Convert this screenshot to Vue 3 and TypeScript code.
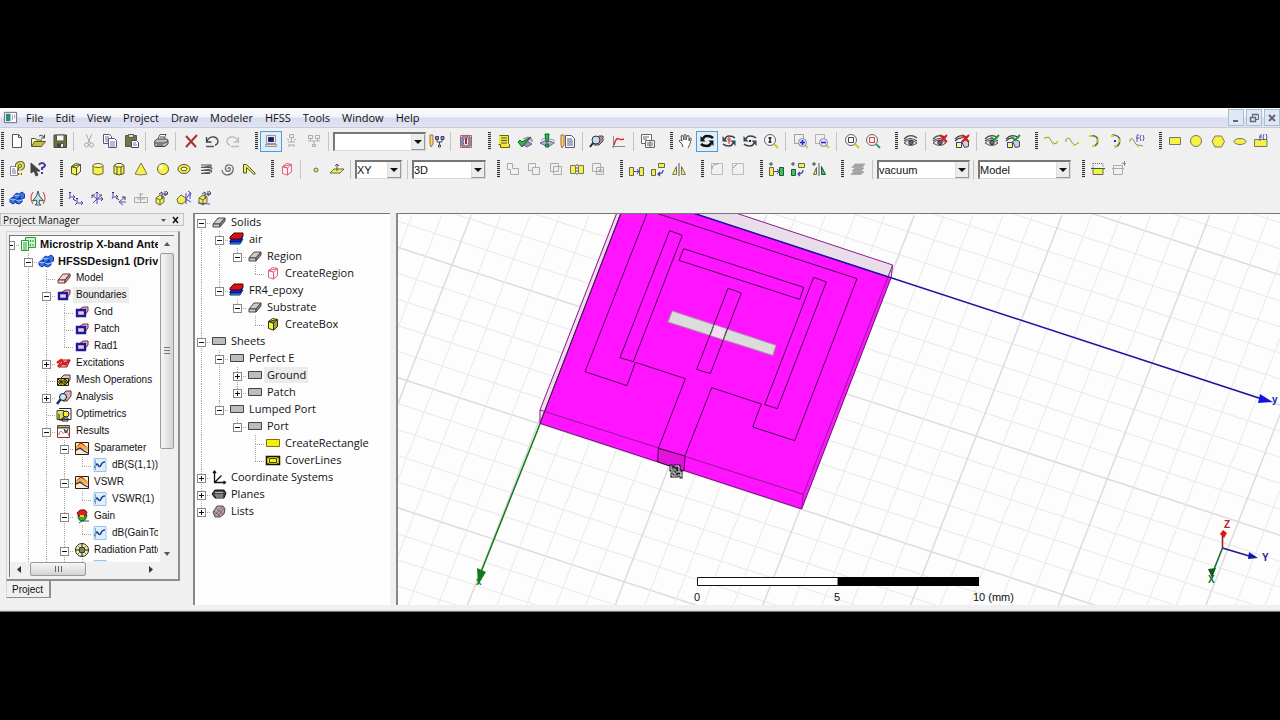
<script setup lang="ts">
import { ref } from 'vue'

type ToolItem =
  | { kind: 'button'; icon: string; label: string; active?: boolean; disabled?: boolean }
  | { kind: 'sep' }
  | { kind: 'select'; label: string; value: string; size: string }

interface TreeNode {
  depth: number
  label: string
  icon: string
  state?: 'open' | 'closed'
  bold?: boolean
  selected?: boolean
}
interface TreeRow extends TreeNode {
  guides: boolean[]
  up: boolean
  down: boolean
}

const Y = '#f4f244'
const box = (fill: string, stroke: string, side: string) =>
  `<path d="M3.5 5.5l4-3 5 1v7l-4 3.5-5-1.5z" fill="${fill}" stroke="${stroke}"/><path d="M3.5 5.5l5 1.5v7l4-3.5v-7z" fill="${side}" stroke="${stroke}"/><path d="M3.5 5.5l5 1.5 4-3.5" stroke="${stroke}"/>`
const brick = (top: string, side: string, line: string) =>
  `<path d="M2 10l5-6h7l-5 6z" fill="${top}" stroke="${line}"/><path d="M2 10h7v3H2z" fill="${top}" stroke="${line}"/><path d="M9 10l5-6v3l-5 6z" fill="${side}" stroke="${line}"/>`
const eye =
  '<path d="M1 6q6-6 13-1M1 8q6-5 13 0" stroke="#444" stroke-width="1.200"/><path d="M1 10q6-6 13 0-6 5-13 0z" fill="#e4e4ea" stroke="#555"/><circle cx="8" cy="9.500" r="2.200" fill="#668" stroke="#334"/>'
const home =
  '<path d="M1 6q6-6 13-1M1 8q4-4 8-3" stroke="#444" stroke-width="1.200"/><path d="M7.500 8.500l3-2 4 2v5l-4 1z" fill="#ccd" stroke="#445"/><path d="M2.500 9.500h5v5h-5z" fill="#ff6" stroke="#33a"/>'
const redX = '<path d="M8 2l7 7M15 2l-7 7" stroke="#d02020" stroke-width="2"/>'
const greenTick = '<path d="M7 4l3 3 5-5" stroke="#239b3a" stroke-width="2"/>'
const lens = (inner: string, handle = '#d8c82a') =>
  `<path d="M11 11l4 4" stroke="${handle}" stroke-width="2"/><circle cx="7" cy="7" r="5.500" fill="#f6f6fa" stroke="#666"/>${inner}`
const rotate = (c: string, w: string) =>
  `<path d="M4 6q1-3 4-3 4 0 6 2M12 10q-1 3-4 3-4 0-6-2" stroke="${c}" stroke-width="${w}"/><path d="M1.500 3v5.500h5zM14.500 13V7.500h-5z" fill="${c}" stroke="none"/>`
const axisBox =
  '<path d="M2 8l4-3 4 2v5l-4 3-4-2z" fill="#f4f244" stroke="#665"/><path d="M2 8l4 2 4-3M6 10v5" stroke="#665"/><path d="M8 2v7M5 4l3-2M8 4h6M12 1l2 2M11 6l3-3M11 1v5" stroke="#446"/>'
const plus = '<path d="M1 3h4M3 1v4" stroke="#444"/>'

const icons: Record<string, string> = {
  new: '<path d="M3.500 1.500h6l3 3v10h-9z" fill="#fff" stroke="#555"/><path d="M9.500 1.500v3h3" stroke="#555"/>',
  open: '<path d="M1.500 13V5.500h4l1 1.500h5v2" fill="#fdfbc0" stroke="#5b5a20"/><path d="M1.500 13.500l3-5h11l-4 5z" fill="#c3bd4c" stroke="#5b5a20"/><path d="M9 3q3-2 5 1M14.500 1.500V5H11" stroke="#444"/>',
  save: '<path d="M2 2h12.500v12.500H2z" fill="#6f723a" stroke="#444"/><path d="M4.500 2h7.500v6H4.500z" fill="#f7f7ee" stroke="#555"/><path d="M5 10.500h6.500v4H5z" fill="#444" stroke="none"/><path d="M9 11h2v3H9z" fill="#eee" stroke="none"/>',
  cut: '<path d="M5 1l4 9M11 1L7 10" stroke="#aaa"/><circle cx="5.500" cy="12" r="2" stroke="#aaa"/><circle cx="10.500" cy="12" r="2" stroke="#aaa"/>',
  copy: '<path d="M1.500 1.500h6l2 2v7h-8z" fill="#fff" stroke="#557"/><path d="M6.500 5.500h6l2 2v7h-8z" fill="#fff" stroke="#557"/><path d="M3 4h4M3 6h3M3 8h3M8 9h5M8 11h5M8 13h5" stroke="#6a74b8"/>',
  paste: '<path d="M1.500 2.500h11v11h-11z" fill="#76753c" stroke="#555"/><path d="M4.500 1.500h5v3h-5z" fill="#ddd" stroke="#555"/><path d="M7.500 7.500h5l2 2v5h-7z" fill="#fff" stroke="#446"/><path d="M9 10h3M9 12h4" stroke="#6a74b8"/>',
  print: '<path d="M5 6l2-4.500h6L11 6" fill="#fff" stroke="#555"/><path d="M1.500 8l3-2h9l1.500 1v4l-3 2.500h-10z" fill="#bbb" stroke="#444"/><path d="M2 10h10l3-2M4 12h6M7 4h4" stroke="#444"/>',
  del: '<path d="M3 3l10 11M14 2L3 14" stroke="#a8322e" stroke-width="2"/>',
  undo: '<path d="M2.500 4v5h5M3 8.500q2-5 7-4.500 4 1 4 5-1 3-3 3" stroke="#444" stroke-width="1.300"/><path d="M2 13.500h8" stroke="#555" stroke-width="1.500"/>',
  redo: '<path d="M13.500 4v5h-5M13 8.500q-2-5-7-4.500-4 1-4 5 1 3 3 3" stroke="#bbb" stroke-width="1.300"/><path d="M6 13.500h8" stroke="#bbb" stroke-width="1.500"/>',
  pc: '<path d="M3.500 2.500h9v8h-9z" fill="#e8e8ee" stroke="#999"/><path d="M5.500 4.500h5v4h-5z" fill="#0a1aa8" stroke="#334"/><path d="M2.500 11.500h11v2h-11z" fill="#ddd" stroke="#999"/>',
  remote: '<path d="M5.500 1.500h4v3h-4zM7.500 5v4M4 9h7M4 12h7M5 14l1-2M10 14l-1-2M3 6l2 1M12 6l-2 1" stroke="#aaa"/>',
  cluster: '<path d="M2.500 2.500h4v3h-4zM9.500 2.500h4v3h-4zM4.500 6v2h7V6M8 8v3M6.500 11.500h3v2h-3zM2 8h2M12 8h2" stroke="#aaa"/>',
  network: '<path d="M1 2h3v9l-2 3-1-3z" fill="#f3e13a" stroke="#a66"/><path d="M6.500 3.500h3v3h-3zM12 3.500h3v3h-3z" fill="#8888cc" stroke="#446"/><path d="M8 7v2h5V7M10.500 9v3M9.500 12h2v2h-2z" stroke="#446"/>',
  book: '<path d="M2.500 2.500h11v12h-11z" fill="#dfe6f5" stroke="#c55"/><path d="M4 4h8v9H4z" fill="#e8f0ff" stroke="#335"/><path d="M6 5q-2 4 0 7M10 5q2 4 0 7" stroke="#36a"/><path d="M8 5v6" stroke="#b22" stroke-width="2"/>',
  list: '<path d="M3.500 2.500h9v8l1 1v3h-9v-3h-2" fill="#f0ea30" stroke="#665f10"/><path d="M5 5h6M5 7.500h6M5 10h6" stroke="#554"/>',
  check: '<path d="M5 11l5-3 5 3-5 3z" fill="#b77bd0" stroke="#668"/><path d="M6 6l5-2 4 2v3" fill="#b9c3d0" stroke="#889"/><path d="M1 9l4 5 9-10-9 5-2-2z" fill="#28b84a" stroke="#14602a"/>',
  run: '<path d="M1 10l7-3 7 3-6 4z" fill="#b5b0d8" stroke="#668"/><path d="M2 7l4-2 9 2v4" stroke="#99a"/><path d="M6 1h4l-1 8H7zM6.500 11h3v3h-3z" fill="#2cc052" stroke="#14602a"/>',
  notes: '<path d="M1 2h3v10l-2 3-1-3z" fill="#f3e13a" stroke="#a66"/><path d="M5.500 2.500h6l3 3v9h-9z" fill="#fff" stroke="#557"/><path d="M7 6h5M7 8h6M7 10h6M7 12h6" stroke="#557"/>',
  mag: '<path d="M5 6l5-3h4v5l-4 4H5z" fill="#bb8fa0" stroke="#544"/><circle cx="7" cy="7" r="4" fill="#bfe0ee" stroke="#333"/><path d="M4 10l-3 4" stroke="#223" stroke-width="2"/>',
  plot: '<path d="M2.500 3v12M1 13.500h13" stroke="#888"/><path d="M3 12q2-8 5-6 1 1 5 0" stroke="#e03030" stroke-width="1.500"/>',
  sheets: '<path d="M1.500 1.500h10v9h-10z" fill="#fff" stroke="#666"/><path d="M3 4h6M3 6h4" stroke="#666"/><path d="M5.500 7.500h9v7h-9z" fill="#eee" stroke="#666"/><path d="M7 10h6M7 12h6M10 8v6" stroke="#777"/>',
  hand: '<path d="M5 14q0-3-4-6 1-2 3 0L3 3q1-1 2 0l1 4V2q1-1 2 0v5l1-4q1-1 2 0v5l1-3q2 0 1 2-1 5-3 8" fill="#fff" stroke="#555"/>',
  rot: rotate('#111', '2.5'),
  rotZ: rotate('#345', '1.500') + '<path d="M8 4v7M6 6h4M7 8h3" stroke="#d33"/>',
  rotS: rotate('#345', '1.500') + '<path d="M7 7h2v2H7z" fill="#222" stroke="none"/>',
  zoomD: lens('<path d="M7 4v6M5.500 5h3M5.500 9h3" stroke="#222" stroke-width="1.500"/>'),
  zoomIn: '<path d="M1.500 1.500h9v9h-9z" stroke="#555" stroke-dasharray="1 1"/><path d="M12 12l3 3" stroke="#d8c82a" stroke-width="2"/><circle cx="9.500" cy="9.500" r="4" fill="#dfe0fa" stroke="#88a"/><path d="M7 9.500h5M9.500 7v5" stroke="#22c" stroke-width="1.500"/>',
  zoomOut: '<path d="M1.500 1.500h9v9h-9z" stroke="#777" stroke-dasharray="1 1"/><path d="M12 12l3 3" stroke="#d8c82a" stroke-width="2"/><circle cx="9.500" cy="9.500" r="4" fill="#dfe0fa" stroke="#88a"/><path d="M7 9.500h5" stroke="#22c" stroke-width="1.500"/>',
  fitAll: lens('<path d="M4.500 4.500h5v5h-5z" stroke="#444"/>'),
  fitSel: lens('<path d="M4.500 4.500h5v5h-5z" stroke="#d33"/>', '#3c9a6a'),
  eye,
  eyeX: eye + redX,
  homeX: home + redX,
  eyeV: eye + greenTick,
  homeV: home + greenTick,
  line: '<path d="M2 5l4-1 4 7 4-1" stroke="#889"/><path d="M1 4h2v2H1zM5 4h2v2H5zM9 9h2v2H9zM13 8h2v2h-2z" fill="#d6d020" stroke="none"/>',
  spline: '<path d="M1 8q3-6 6 0t7 2" stroke="#889"/><path d="M1 7h2v2H1zM5 5h2v2H5zM9 11h2v2H9zM13 9h2v2h-2z" fill="#d6d020" stroke="none"/>',
  arc: '<path d="M4 3q8-1 8 5-1 5-5 5" stroke="#667" stroke-width="1.500"/><path d="M3 2h3v2H3zM10 6h3v3h-3zM6 12h3v2H6z" fill="#d6d020" stroke="none"/>',
  arcC: '<path d="M4 2q8 0 8 6-1 5-5 6" stroke="#667" stroke-width="1.500"/><path d="M3 2h3v2H3zM10 6h3v3h-3zM6 12h3v2H6z" fill="#d6d020" stroke="none"/><path d="M6 8h2" stroke="#33a" stroke-width="2"/>',
  eqn: '<path d="M0 8q3-5 5 0t4 4l5 1" stroke="#889"/><path d="M0 7h2v2H0zM8 12h2v2H8z" fill="#d6d020" stroke="none"/><path d="M8 9V3q0-2 2-1M7 5h3M12 2q-2 3 0 6M14 2q2 3 0 6" stroke="#55b"/>',
  rect: `<path d="M2.500 4.500h11v7h-11z" fill="${Y}" stroke="#776"/>`,
  circle: `<circle cx="8" cy="8" r="5.500" fill="${Y}" stroke="#776"/>`,
  hex: `<path d="M2 8.500l3-5.500h6.500l3 5.500-3 5.500H5z" fill="${Y}" stroke="#776"/>`,
  ellipse: `<ellipse cx="8" cy="8.500" rx="6" ry="3" fill="${Y}" stroke="#776"/>`,
  eqSurf: `<path d="M1.500 6.500h12.500v7H1.500z" fill="${Y}" stroke="#776"/><path d="M7 8V3q0-2 2-1M6 4h3M11 1q-2 3 0 6M13 1q2 3 0 6" stroke="#55b"/>`,
  help: '<path d="M1.500 5.500h7v9h-7z" fill="#fff" stroke="#888"/><path d="M3 8h3M3 10h4M3 12h4" stroke="#77a"/><path d="M8 6V4q1-2 3.500-2T14 5q0 2-3 3v2M11 12v2" stroke="#665" stroke-width="4"/><path d="M8 6V4q1-2 3.500-2T14 5q0 2-3 3v2M11 12v2" stroke="#e8e030" stroke-width="2"/>',
  ctxHelp: '<path d="M1 2v10l3-2 2 5 2-1-2-4h4z" fill="#444" stroke="#444"/><path d="M9 4q1-2 3-2t3 2q0 2-3 3v2M12 11v2" stroke="#443a9a" stroke-width="2"/>',
  cube: box(Y, '#55542a', '#fbfbb0'),
  cyl: `<path d="M3 4.500v8q5 3 10 0v-8z" fill="${Y}" stroke="#66652f"/><ellipse cx="8" cy="4.500" rx="5" ry="2" fill="#fdfcc0" stroke="#66652f"/>`,
  prism: `<path d="M3 4.500v8q5 3 10 0v-8z" fill="${Y}" stroke="#55542a"/><path d="M3 4.500l3-2h4l3 2-3 1.500H6zM6 6v8M10 6v8" fill="#fdfcc0" stroke="#55542a"/>`,
  cone: `<path d="M8 2l6 11q-6 2-12 0z" fill="${Y}" stroke="#776"/>`,
  sphere: `<circle cx="8" cy="8" r="5.500" fill="${Y}" stroke="#66652f"/><circle cx="6" cy="6" r="2" fill="#ffffd0" stroke="none"/>`,
  torus: `<ellipse cx="8" cy="8" rx="6" ry="4.500" fill="${Y}" stroke="#55542a"/><ellipse cx="8" cy="8" rx="3" ry="1.800" fill="#fff" stroke="#55542a"/>`,
  helix: '<path d="M3 4h9q2 0 1 1l-10 1.500h10q2 1 0 1.500L3 9.500h10q1 1 0 1.500L3 12.500h9" stroke="#555" stroke-width="1.200"/>',
  spiral: '<path d="M8 8q0-2 2-1 1 3-2 3.500-3-1-2.500-4T10 4q4 1 3 5.500T6 14q-4-2-4-5" stroke="#666" stroke-width="1.200"/>',
  bond: `<path d="M2.500 12V3.500h3l9 9-1.500 1-7.500-7v5.500z" fill="${Y}" stroke="#55542a"/>`,
  region: box('#fff4f6', '#e0607a', '#fff4f6'),
  dot: `<circle cx="8" cy="9" r="2" fill="${Y}" stroke="#665"/>`,
  plane: `<path d="M1 12l4-4h10l-4 4z" fill="${Y}" stroke="#665"/><path d="M8 10V3M6 5l2-2 2 2" stroke="#555"/>`,
  unite: '<path d="M2.500 2.500h5v5h6v6h-8v-5h-3z" stroke="#aaa"/>',
  subtract: '<path d="M2.500 2.500h7v4h-3v3h-4z" stroke="#aaa"/><path d="M6.500 6.500h7v7h-7z" stroke="#aaa"/>',
  intersect: '<path d="M2.500 2.500h8v8h-8zM5.500 5.500h8v8h-8z" stroke="#aaa"/>',
  split: `<path d="M1.500 4.500h5v8h-5zM9.500 4.500h5v8h-5z" fill="${Y}" stroke="#776"/><path d="M8 3v11" stroke="#555" stroke-dasharray="2 1"/>`,
  imprint: '<path d="M2.500 2.500h8v8h-8z" stroke="#aaa"/><path d="M6.500 6.500h7v7h-7zM9 9h3v2H9z" stroke="#aaa"/>',
  move: `<path d="M1.500 6.500h4v8h-4zM11.500 6.500h4v8h-4z" fill="${Y}" stroke="#665"/><path d="M6 10.500h5M9 8l2 2.500L9 13" stroke="#44a"/>`,
  turn: `<path d="M8.500 2.500h6v4h-6zM1.500 8.500h4v6h-4z" fill="${Y}" stroke="#665"/><path d="M13 9q0 4-5 4M10 11l-2 2 2 2" stroke="#44a" stroke-width="1.300"/>`,
  mirror: `<path d="M1.500 13.500h4v-8zM14.500 13.500h-4v-8z" fill="${Y}" stroke="#776"/><path d="M8 2v13" stroke="#555"/>`,
  dupMove: plus + `<path d="M1.500 6.500h4v8h-4z" fill="${Y}" stroke="#665"/><path d="M11.500 6.500h4v8h-4z" fill="#39c94f" stroke="#254"/><path d="M6 10.500h5M9 8l2 2.500L9 13" stroke="#44a"/>`,
  dupTurn: plus + `<path d="M8.500 2.500h6v4h-6z" fill="${Y}" stroke="#665"/><path d="M1.500 8.500h4v6h-4z" fill="#39c94f" stroke="#254"/><path d="M13 9q0 4-5 4M10 11l-2 2 2 2" stroke="#44a" stroke-width="1.300"/>`,
  dupMirror: plus + `<path d="M2.500 13.500h3v-7z" fill="${Y}" stroke="#665"/><path d="M14.500 13.500h-4v-8z" fill="#39c94f" stroke="#254"/><path d="M8 2v13" stroke="#555"/>`,
  fillet: '<path d="M2.500 2.500h11v11h-11z" stroke="#bbb"/><path d="M3 8q0-5 6-5" stroke="#999"/>',
  chamfer: '<path d="M2.500 2.500h11v11h-11z" stroke="#bbb"/><path d="M3 7l4-4" stroke="#999"/>',
  layers: '<path d="M2 6.500l3-3.500h10l-3 3.500zM2 10l3-3h9l-3 3zM1 13.500l3-3h10l-3 3z" fill="#a2a2a2" stroke="#aaa"/>',
  section: `<path d="M3 2.500h10v4" stroke="#666" stroke-dasharray="1 1"/><path d="M3 2v5" stroke="#666" stroke-dasharray="1 1"/><path d="M3 7.500h10v6H3z" fill="${Y}" stroke="#665"/><path d="M1 7.500h14" stroke="#263"/>`,
  sectionAdd: '<path d="M2.500 4.500h9v9h-9zM1 7.500h12" stroke="#aaa"/><path d="M11 2.500h4M13.500 0v5" stroke="#888"/>',
  hfss: '<path d="M1 9l3-2 3 2v3l-3 2-3-2zM5 5l3-2 3 2v3l-3 2-3-2zM7 10l3-2 3 2v2l-3 2-3-1zM10 4l3-2 2.500 2v4l-3 1-2-1z" fill="#2a7ae0" stroke="#2030a8"/><path d="M5 5l3 1 3-1M1 9l3 1 3-1M7 10l3 1 3-1" stroke="#9cf"/>',
  plane3d: '<path d="M8 1l1.500 5 4 5-4-1-.5 3 2 2H5l2-2-.5-3-4 1 4-5z" fill="#bfe6ea" stroke="#355"/><path d="M3 2Q-1 8 3 14M13 2q4 6 0 12" stroke="#d55" stroke-width="1.200"/>',
  cs1: '<path d="M2 2v5h5M2 7l-1 2M5 5l2 2-2 2M9 8v5h6M9 13l-2 2M13 11l2 2-2 2" stroke="#5148c8"/><path d="M1 3l1-1 1 1M5 9l3 2M8 9l1-1 1 1" stroke="#333"/>',
  cs2: '<path d="M8 2v12M3 5l5 4 5-4M8 9l-4 4M8 9h6" stroke="#5148c8"/><path d="M6.500 3.500L8 2l1.500 1.500M3 8V5h3M12 7l2 2-2 2M10 5h3" stroke="#446"/>',
  cs3: '<path d="M2 2v5h5M2 7l-1 2M14 7l-6 5h7M8 12l4 3" stroke="#5148c8"/><path d="M1 3l1-1 1 1M5 8l3 2M11 7h3v3M5 5l2 2" stroke="#333"/>',
  cs4: '<path d="M1.500 7.500h13v5h-13zM7.500 3v9M4 9h8M6 4h4" stroke="#aaa"/>',
  cs5: axisBox,
  cs6: '<path d="M1 9l4-4 5 3v3l-4 3-4-1z" fill="#f4f244" stroke="#665"/><path d="M10 3v11M10 9l4-6M10 9l5 3M12 1l3 2-1 3M14 5v4" stroke="#5148c8"/>',
  cs7: axisBox + '<path d="M1 13l12 1" stroke="#5148c8"/>',
  project: '<path d="M5.500 1.500h10v10h-10z" fill="#c9f5c9" stroke="#2f9a3c"/><path d="M1.500 4.500h7v10h-7z" fill="#e8ffe8" stroke="#2f9a3c"/><path d="M3 7h4M3 9h4M3 11h4M3 13h4M10.500 4v2M13 4v2M10.500 8v2M13 8v2" stroke="#2f9a3c"/>',
  model: brick('#f3d3d3', '#b58f8f', '#6b3b3b'),
  solid: brick('#cfcaca', '#8d8686', '#4c4646'),
  bound: '<path d="M5 6l4-3h5v4l-4 5z" fill="#f0b8c4" stroke="#7a2b3b"/><path d="M3 6h8v6H3z" fill="#f1c9d6" stroke="#1a1a9a" stroke-width="2.400"/>',
  excite: '<path d="M2 11l4-6h8l-3 7H3z" fill="#f0b8c4" stroke="#7a2b3b"/><path d="M1 8l4-3 4 4 5-4M2 12q4-5 9-2" stroke="#e01818" stroke-width="2.400"/>',
  mesh: '<path d="M5 6l3-3h6v5l-3 4z" fill="#e9c9c9" stroke="#533"/><path d="M1.500 6.500h11v7h-11z" fill="#e8dc30" stroke="#221"/><path d="M2 10h10M5 7v6M9 7v6M2 7l3 3 4-3 3 3M2 13l3-3 4 3 3-3" stroke="#221"/>',
  analysis: '<path d="M6 6l4-4h5v5l-4 5H7z" fill="#e3b3bb" stroke="#533"/><circle cx="7" cy="8" r="3.500" fill="#c9eaf5" stroke="#111"/><path d="M4.500 10.500L1 15" stroke="#14306a" stroke-width="2.500"/>',
  opti: '<path d="M3 2.500h12v11H8" fill="#fff" stroke="#224"/><path d="M1 4.500h7v9H1z" fill="#e9e05a" stroke="#443"/><circle cx="10" cy="8" r="3" fill="#f4ec30" stroke="#222"/><path d="M3 8v6h4M6 12h6v3H6z" stroke="#222"/>',
  results: '<path d="M1.500 2.500h12v12h-12z" fill="#fff" stroke="#833"/><path d="M2 4.500h11" stroke="#2a6a3a" stroke-width="2"/><path d="M3 12q1-6 3-3t3-1 4 5" stroke="#d66"/><path d="M8 6l2 4 2-4" stroke="#222"/>',
  report: '<path d="M1.500 2.500h13v12h-13z" fill="#fff1b8" stroke="#222"/><path d="M2 8l5-5 7 6" stroke="#c22" stroke-width="1.500"/><path d="M2 7l5-3 7 4v3l-6-2-6 2z" fill="#f3b440" stroke="none"/><path d="M2 10l4-2 4 3 4 2" stroke="#2222b8" stroke-width="1.300"/>',
  trace: '<path d="M2 1.500h12v13H2z" fill="#dff0fd" stroke="#9cc4e8"/><path d="M3 11q1-6 3-3t3 0 4-3" stroke="#223a9a" stroke-width="1.500"/><path d="M3.500 3v10" stroke="#7ab"/>',
  gain: '<path d="M4 7q0 6 4 6t5-6z" fill="#3ca83c" stroke="#165a16"/><path d="M3 5q3-4 5-3 4-1 5 3l-2 3H5z" fill="#d82222" stroke="#711"/><path d="M6 7h4v2H6z" fill="#f0d020" stroke="none"/><path d="M8 13h7M8 13l-3 2" stroke="#146a5a"/>',
  radiation: '<circle cx="8" cy="8" r="6.500" fill="#f5f3a8" stroke="#222"/><circle cx="8" cy="8" r="3" stroke="#333"/><path d="M1 8h14M8 1v14" stroke="#222"/><path d="M3.500 3.500l9 9M12.500 3.500l-9 9" stroke="#776"/>',
  material: '<path d="M1 12l4-4h9l-3 5H1z" fill="#29b6f2" stroke="#036"/><path d="M1 10l4-5h9l-3 6H1z" fill="#1a1ae0" stroke="#006"/><path d="M1 6l4-4h9v3l-3 3H1z" fill="#d41414" stroke="#500"/>',
  createBox: box(Y, '#332', '#a8a430'),
  sheet: '<path d="M1.500 4.500h13v7h-13z" fill="#bdbdbd" stroke="#444"/>',
  yellow: '<path d="M1.500 4.500h13v7h-13z" fill="#f5f000" stroke="#77731a"/>',
  cover: '<path d="M1.500 4.500h13v8h-13z" fill="#f5f000" stroke="#111" stroke-width="1.500"/><path d="M4.500 6.500h7v4h-7zM2 5l2 1M14 5l-2 1M2 12l2-1M14 12l-2-1" stroke="#443"/>',
  coords: '<path d="M3.500 2v11.500h11M3.500 13.500l7-7M2 4l1.500-2L5 4M12.500 12l2 1.500-2 1.500" stroke="#111" stroke-width="1.300"/>',
  planes: '<path d="M1 8l3-4h9l2 3-2 5H4z" fill="#444" stroke="#111"/><path d="M4 6.500h8M4 9h8M5 11h7" stroke="#bbb"/>',
  lists: '<path d="M2 9l4-6h6l2 3-1 5-4 3H4z" fill="#b9a5a5" stroke="#5a4848"/><path d="M4 12l7-8M7 13l6-8M3 8l6 5M5 5l7 6" stroke="#7a6565"/>',
}

const b = (icon: string, label: string, extra: { active?: boolean; disabled?: boolean } = {}): ToolItem => ({
  kind: 'button', icon, label, ...extra,
})
const s: ToolItem = { kind: 'sep' }
const off = { disabled: true }
const sel = (label: string, value: string, size: string): ToolItem => ({ kind: 'select', label, value, size })

const toolRows: { name: string; bars: ToolItem[][] }[] = [
  {
    name: 'main',
    bars: [
      [b('new', 'New'), b('open', 'Open'), b('save', 'Save'), s, b('cut', 'Cut', off), b('copy', 'Copy'), b('paste', 'Paste'), s, b('print', 'Print'), s, b('del', 'Delete'), b('undo', 'Undo'), b('redo', 'Redo', off)],
      [b('pc', 'Local machine', { active: true }), b('remote', 'Remote', off), b('cluster', 'Distributed', off), s, sel('Machine', '', 'large'), b('network', 'Configure machines'), s, b('book', 'Help topics')],
      [b('list', 'Solution setup'), b('check', 'Validate'), b('run', 'Analyze all'), b('notes', 'Notes'), s, b('mag', 'Solution data'), b('plot', 'Results plot'), s, b('sheets', 'Copy image')],
      [b('hand', 'Pan'), b('rot', 'Rotate around model', { active: true }), b('rotZ', 'Rotate around axis'), b('rotS', 'Rotate around screen'), b('zoomD', 'Dynamic zoom'), s, b('zoomIn', 'Zoom in'), b('zoomOut', 'Zoom out'), s, b('fitAll', 'Fit all'), b('fitSel', 'Fit selection')],
      [b('eye', 'Visibility'), s, b('eyeX', 'Hide selection'), b('homeX', 'Hide in all views'), s, b('eyeV', 'Show selection'), b('homeV', 'Show in all views')],
      [b('line', 'Draw line'), b('spline', 'Draw spline'), b('arc', 'Three point arc'), b('arcC', 'Center arc'), b('eqn', 'Equation curve')],
      [b('rect', 'Rectangle'), b('circle', 'Circle'), b('hex', 'Regular polygon'), b('ellipse', 'Ellipse'), b('eqSurf', 'Equation surface')],
    ],
  },
  {
    name: 'draw',
    bars: [
      [b('help', 'Help'), b('ctxHelp', 'Context help')],
      [b('cube', 'Box'), b('cyl', 'Cylinder'), b('prism', 'Regular polyhedron'), b('cone', 'Cone'), b('sphere', 'Sphere'), b('torus', 'Torus'), b('helix', 'Helix'), b('spiral', 'Spiral'), b('bond', 'Bondwire')],
      [b('region', 'Region'), s, b('dot', 'Point'), b('plane', 'Plane'), s, sel('Drawing plane', 'XY', 'small'), s, sel('Movement mode', '3D', 'medium')],
      [b('unite', 'Unite', off), b('subtract', 'Subtract', off), b('intersect', 'Intersect', off), b('split', 'Split'), b('imprint', 'Imprint', off)],
      [b('move', 'Move'), b('turn', 'Rotate'), b('mirror', 'Mirror')],
      [b('fillet', 'Fillet', off), b('chamfer', 'Chamfer', off)],
      [b('dupMove', 'Duplicate along line'), b('dupTurn', 'Duplicate around axis'), b('dupMirror', 'Duplicate mirror')],
      [b('layers', 'Layers', off), s, sel('Material', 'vacuum', 'large'), s, sel('Object type', 'Model', 'large')],
      [b('section', 'Section'), b('sectionAdd', 'Add section', off)],
    ],
  },
  {
    name: 'coords',
    bars: [
      [b('hfss', 'Insert HFSS design'), b('plane3d', 'Insert HFSS-IE design')],
      [b('cs1', 'Offset coordinate system'), b('cs2', 'Rotated coordinate system'), b('cs3', 'Offset and rotated'), b('cs4', 'Face offset', off), b('cs5', 'Face coordinate system'), b('cs6', 'Object coordinate system'), b('cs7', 'Object rotated system')],
    ],
  },
]

const menus = ['File', 'Edit', 'View', 'Project', 'Draw', 'Modeler', 'HFSS', 'Tools', 'Window', 'Help']

const n = (depth: number, label: string, icon: string, extra: Partial<TreeNode> = {}): TreeNode => ({ depth, label, icon, ...extra })
const open = { state: 'open' as const }
const closed = { state: 'closed' as const }

/* `continuing` lists the depths whose guide lines run on below the last row. */
function layoutTree(nodes: TreeNode[], continuing: number[] = []): TreeRow[] {
  const hasNext = (i: number, depth: number) => {
    for (let k = i + 1; k < nodes.length; k++) {
      if (nodes[k].depth === depth) return true
      if (nodes[k].depth < depth) return false
    }
    return continuing.includes(depth)
  }
  return nodes.map((node, i) => ({
    ...node,
    guides: Array.from({ length: node.depth }, (_, d) => hasNext(i, d)),
    up: i > 0,
    down: hasNext(i, node.depth),
  }))
}

const projectTree = layoutTree(
  [
    n(0, 'Microstrip X-band Antenna', 'project', { ...open, bold: true }),
    n(1, 'HFSSDesign1 (DrivenModal)', 'hfss', { ...open, bold: true }),
    n(2, 'Model', 'model'),
    n(2, 'Boundaries', 'bound', { ...open, selected: true }),
    n(3, 'Gnd', 'bound'),
    n(3, 'Patch', 'bound'),
    n(3, 'Rad1', 'bound'),
    n(2, 'Excitations', 'excite', closed),
    n(2, 'Mesh Operations', 'mesh'),
    n(2, 'Analysis', 'analysis', closed),
    n(2, 'Optimetrics', 'opti'),
    n(2, 'Results', 'results', open),
    n(3, 'Sparameter', 'report', open),
    n(4, 'dB(S(1,1))', 'trace'),
    n(3, 'VSWR', 'report', open),
    n(4, 'VSWR(1)', 'trace'),
    n(3, 'Gain', 'gain', open),
    n(4, 'dB(GainTotal)', 'trace'),
    n(3, 'Radiation Pattern', 'radiation', open),
    n(4, 'dB(GainTotal)', 'trace'),
  ],
  [1, 2, 3],
)

const modelTree = layoutTree([
  n(0, 'Solids', 'solid', open),
  n(1, 'air', 'material', open),
  n(2, 'Region', 'solid', open),
  n(3, 'CreateRegion', 'region'),
  n(1, 'FR4_epoxy', 'material', open),
  n(2, 'Substrate', 'solid', open),
  n(3, 'CreateBox', 'createBox'),
  n(0, 'Sheets', 'sheet', open),
  n(1, 'Perfect E', 'sheet', open),
  n(2, 'Ground', 'sheet', { ...closed, selected: true }),
  n(2, 'Patch', 'sheet', closed),
  n(1, 'Lumped Port', 'sheet', open),
  n(2, 'Port', 'sheet', open),
  n(3, 'CreateRectangle', 'yellow'),
  n(3, 'CoverLines', 'cover'),
  n(0, 'Coordinate Systems', 'coords', closed),
  n(0, 'Planes', 'planes', closed),
  n(0, 'Lists', 'lists', closed),
])

const trees = ref({ project: projectTree, model: modelTree })

/* Ground grid: two families of parallel lines, every fifth one heavier. */
const gridLines: { x1: number; y1: number; x2: number; y2: number; major: boolean }[] = []
for (let k = -12; k <= 20; k++) {
  const c = 281 + 26.05 * k
  gridLines.push({ x1: 390, y1: c - 510 * 0.3265, x2: 1290, y2: c + 390 * 0.3265, major: k % 5 === 0 })
}
for (let k = -8; k <= 30; k++) {
  const x = 619 + 29.54 * k
  gridLines.push({ x1: x, y1: 215, x2: x - 151.5, y2: 605, major: k % 5 === 0 })
}
</script>

<template>
  <div class="screen">
    <main class="app">
      <header class="menubar">
        <svg class="doc-icon" viewBox="0 0 16 16" aria-hidden="true">
          <path d="M1.500 2.500h13v11h-13z" fill="#fff" stroke="#667" />
          <path d="M3 4h5v8H3z" fill="#2c8a80" />
          <path d="M10 5v6M12.500 5v4" stroke="#99a" />
        </svg>
        <nav class="menus">
          <button v-for="m in menus" :key="m" type="button" class="menu">{{ m }}</button>
        </nav>
        <div class="window-buttons">
          <button type="button" aria-label="Minimize"><svg viewBox="0 0 14 14"><path d="M4 10h5" stroke="#667" stroke-width="2" /></svg></button>
          <button type="button" aria-label="Restore"><svg viewBox="0 0 14 14" fill="none" stroke="#667"><path d="M5.500 6V3.500h6v5H9" /><path d="M3.500 6.500h5v4h-5zM5 3.500h6" stroke-width="1.500" /></svg></button>
          <button type="button" aria-label="Close"><svg viewBox="0 0 14 14"><path d="M4 4l6 6M10 4l-6 6" stroke="#667" stroke-width="2" /></svg></button>
        </div>
      </header>

      <div v-for="row in toolRows" :key="row.name" class="toolrow" :class="row.name">
        <div v-for="(bar, i) in row.bars" :key="i" class="toolbar" role="toolbar">
          <span class="grip"></span>
          <template v-for="(item, j) in bar" :key="j">
            <button
              v-if="item.kind === 'button'"
              type="button"
              class="tool"
              :class="{ active: item.active }"
              :disabled="item.disabled"
              :aria-label="item.label"
            >
              <svg class="icon" viewBox="0 0 16 16" v-html="icons[item.icon]"></svg>
            </button>
            <span v-else-if="item.kind === 'sep'" class="sep"></span>
            <span v-else class="combo" :class="item.size">
              <select :aria-label="item.label"><option>{{ item.value }}</option></select>
              <span class="drop"></span>
            </span>
          </template>
        </div>
      </div>

      <div class="workspace">
        <section class="project-manager">
          <div class="panel-title">
            <span>Project Manager</span>
            <button type="button" aria-label="Panel menu"><svg viewBox="0 0 8 8"><path d="M1 3h5l-2.500 3z" fill="#555" /></svg></button>
            <button type="button" aria-label="Close panel"><svg viewBox="0 0 8 8"><path d="M1 1l5 6M6 1L1 7" stroke="#111" stroke-width="1.500" /></svg></button>
          </div>
          <div class="tree-frame">
            <div class="tree-well">
              <ul class="tree small" role="tree">
                <li v-for="(r, i) in trees.project" :key="i" class="node" role="treeitem">
                  <span v-for="(g, d) in r.guides" :key="d" class="cell" :class="{ full: g }"></span>
                  <span class="cell branch" :class="{ up: r.up, down: r.down }">
                    <button v-if="r.state" type="button" class="toggle" :class="r.state" :aria-label="'Toggle ' + r.label"></button>
                  </span>
                  <svg class="node-icon" viewBox="0 0 16 16" v-html="icons[r.icon]"></svg>
                  <span class="label" :class="{ bold: r.bold, selected: r.selected }">{{ r.label }}</span>
                </li>
              </ul>
              <div class="vscroll">
                <svg class="arrow" viewBox="0 0 14 17"><path d="M4 10h6L7 6z" fill="#555" /></svg>
                <div class="vtrack"><div class="vthumb"><i></i><i></i><i></i></div></div>
                <svg class="arrow" viewBox="0 0 14 17"><path d="M4 7h6l-3 4z" fill="#555" /></svg>
              </div>
              <div class="hscroll">
                <svg class="harrow" viewBox="0 0 20 15"><path d="M11 4v7L7 7.500z" fill="#333" /></svg>
                <div class="hthumb"><i></i><i></i><i></i></div>
                <svg class="harrow" viewBox="0 0 20 15"><path d="M9 4v7l4-3.500z" fill="#333" /></svg>
              </div>
            </div>
          </div>
          <button type="button" class="tab">Project</button>
        </section>

        <section class="model-panel">
          <ul class="tree" role="tree">
            <li v-for="(r, i) in trees.model" :key="i" class="node" role="treeitem">
              <span v-for="(g, d) in r.guides" :key="d" class="cell" :class="{ full: g }"></span>
              <span class="cell branch" :class="{ up: r.up, down: r.down }">
                <button v-if="r.state" type="button" class="toggle" :class="r.state" :aria-label="'Toggle ' + r.label"></button>
              </span>
              <svg class="node-icon" viewBox="0 0 16 16" v-html="icons[r.icon]"></svg>
              <span class="label" :class="{ selected: r.selected }">{{ r.label }}</span>
            </li>
          </ul>
        </section>

        <section class="viewport">
          <svg viewBox="398 214 882 396" preserveAspectRatio="xMinYMin slice" fill="none">
            <line
              v-for="(l, i) in gridLines"
              :key="i"
              :x1="l.x1" :y1="l.y1" :x2="l.x2" :y2="l.y2"
              :stroke="l.major ? '#dcdcdc' : '#e8e8e8'"
              :stroke-width="l.major ? 1.5 : 1"
            />
            <!-- substrate, ground and patch -->
            <g class="part" transform="translate(530 205) scale(0.33333)" stroke="#8c1a8c">
              <path d="M480 15L590 15 1088 180 1080 219 497 27z" fill="#eaddea" stroke="none" />
              <path d="M256 27L272 27 30 655V615z" fill="#efdcef" stroke="none" />
              <path d="M276 15L30 655 815 912 1083 219 460 15z" fill="#ff14ff" stroke="#6a0f7a" />
              <path d="M264 15L30 615V655M590 15L1088 180 1083 219M1088 180L820 868 815 912M30 615L820 868" />
              <path d="M277 15L30 655" stroke="#441a4a" />
              <path d="M385 730L465 753 462 798 383 770z" fill="#e214dc" stroke="#3d0b40" />
              <path d="M427 318L738 421 728 451 414 351z" fill="#dcdcdc" stroke="#a0a0a0" />
              <path d="M552 359L590 373 580 403 542 391z" fill="#f5dcf5" stroke="none" />
              <g stroke="#4a0a4c">
                <path d="M355 15L165 500 291 542 316 472 466 521 385 730M465 752L545 548 694 597 668 666 794 707 981 221 350 15" />
                <path d="M419 77L457 91 310 470 270 458z" />
                <path d="M461 131L821 247 809 283 447 166z" />
                <path d="M594 250L634 264 541 506 500 493z" />
                <path d="M851 217L889 231 742 611 704 599z" />
              </g>
              <path d="M552 359L541 391M590 373L580 404" stroke="#3b8a3b" />
            </g>
            <!-- coordinate axes -->
            <path d="M690 212L1262 399" stroke="#1a14a4" stroke-width="1.500" />
            <path d="M1260 394l13 8-15 1z" fill="#1414e0" />
            <path d="M540 424L481 572" stroke="#0f7a1c" stroke-width="1.500" />
            <path d="M477 568l9 4-8 13z" fill="#0f7a1c" />
            <text x="1272" y="403" class="axis" fill="#1c16b4">y</text>
            <text x="476" y="585" class="axis" fill="#0f7a1c">x</text>
            <!-- rotate cursor -->
            <g stroke-linecap="square">
              <path d="M671 466v4h5M675 466h4v5M672 474v2h5M676 472h5v5M678 475h3" stroke="#111" stroke-width="3" />
              <path d="M671 466v4h5M675 466h4v5M672 474v2h5M676 472h5v5M678 475h3" stroke="#fff" />
            </g>
            <!-- scale bar -->
            <path d="M697.500 577.500H838v8H697.500z" fill="#fff" stroke="#111" />
            <path d="M838 577h141v9H838z" fill="#000" />
            <g class="scale" fill="#111">
              <text x="694" y="601">0</text>
              <text x="834" y="601">5</text>
              <text x="973" y="601">10 (mm)</text>
            </g>
            <!-- orientation triad -->
            <path d="M1222.500 548v-14" stroke="#a01414" stroke-width="1.500" />
            <path d="M1220 534l3-4 4 3-3 5z" fill="#dc1414" />
            <path d="M1222.500 548l30 9" stroke="#1c1694" stroke-width="1.500" />
            <path d="M1249 552l9 6-10 1z" fill="#1414a8" />
            <path d="M1222.500 548l-10 25" stroke="#0f6a1c" stroke-width="1.500" />
            <path d="M1208 569l8-1-4 10z" fill="#0f5a1c" />
            <text x="1224" y="528" class="axis" fill="#c02030">Z</text>
            <text x="1262" y="561" class="axis" fill="#1c1694">Y</text>
            <text x="1208" y="583" class="axis" fill="#0f6a1c">X</text>
          </svg>
        </section>
      </div>
    </main>
  </div>
</template>

<style>
html,
body {
  background: #000;
}
</style>

<style scoped>
.screen {
  box-sizing: border-box;
  height: 100vh;
  padding: 15vh 0;
  background: #000;
  font-family: 'Open Sans', 'Noto Sans', sans-serif;
  font-size: 11px;
  color: #111;
}
.app {
  display: flex;
  flex-direction: column;
  height: 100%;
  overflow: hidden;
  background: #f0f0f0;
}
button {
  margin: 0;
  padding: 0;
  border: 0;
  background: none;
  font: inherit;
  color: inherit;
}
svg {
  display: block;
}
.menubar {
  flex: none;
  display: flex;
  align-items: center;
  height: 19px;
  padding-left: 3px;
  border-bottom: 1px solid #c9cbdc;
  background: linear-gradient(#fdfdfe 0%, #f1f3fa 45%, #d9dcf0 55%, #dfe3f3 100%);
}
.doc-icon {
  width: 15px;
  height: 15px;
  fill: none;
}
.menus {
  display: flex;
  gap: 12px;
  margin-left: 8px;
}
.menu {
  line-height: 18px;
}
.window-buttons {
  display: flex;
  gap: 2px;
  margin-left: auto;
}
.window-buttons button {
  width: 16px;
  height: 17px;
  border: 1px solid #a9bdd6;
  background: #dfe8f5;
}
.toolrow {
  flex: none;
  display: grid;
  align-items: center;
}
.main {
  grid-template-columns: 254px 233px 182px 225px 140px 124px 124px;
  height: 26px;
}
.draw {
  grid-template-columns: 59px 211px 226px 123px 81px 59px 81px 241px 59px;
  height: 30px;
}
.coords {
  grid-template-columns: 59px 167px;
  height: 28px;
}
.toolbar {
  display: flex;
  align-items: center;
  height: 22px;
  padding-right: 10px;
}
.grip {
  flex: none;
  width: 3px;
  height: 18px;
  margin: 0 2px 0 1px;
  background: repeating-linear-gradient(#333 0 1px, #ddd 1px 2px);
}
.tool {
  flex: 1;
  min-width: 0;
  height: 21px;
  display: flex;
  align-items: center;
  justify-content: center;
}
.tool.active {
  box-shadow: inset 0 0 0 1px #4f9be0;
  background: #e1eefa;
}
.icon {
  width: 16px;
  height: 16px;
  fill: none;
  flex: none;
}
.sep {
  flex: none;
  width: 1px;
  height: 19px;
  margin: 0 4px 0 3px;
  background: #c4c4c4;
}
.combo {
  position: relative;
  display: flex;
  flex: none;
  height: 19px;
  box-sizing: border-box;
  border: 1px solid #d8d8d8;
  border-top: 2px solid #777;
  border-left: 2px solid #777;
  background: #fff;
}
.combo.small {
  width: 47px;
}
.combo.medium {
  width: 74px;
}
.combo.large {
  width: 93px;
}
.combo select {
  appearance: none;
  flex: 1;
  min-width: 0;
  padding: 0;
  border: 0;
  background: none;
  font: 11px 'Liberation Sans', Arial, sans-serif;
  color: #111;
}
.drop {
  position: absolute;
  top: 0;
  right: 0;
  bottom: 0;
  width: 14px;
  box-sizing: border-box;
  border: 1px solid #999;
  border-top-color: #eee;
  border-left-color: #ddd;
  background: #ececec;
  pointer-events: none;
}
.drop::after {
  content: '';
  position: absolute;
  left: 2px;
  top: 5px;
  border: 4px solid transparent;
  border-top-color: #111;
  border-bottom-width: 0;
}
.workspace {
  flex: 1;
  min-height: 0;
  display: grid;
  grid-template-columns: 193px 199px 1fr;
  margin-top: 1px;
  padding-bottom: 6px;
  border-bottom: 1px solid #777;
  box-shadow: inset 0 -1px 0 #ddd;
}
.project-manager {
  display: flex;
  flex-direction: column;
  min-height: 0;
  min-width: 0;
}
.panel-title {
  display: flex;
  align-items: center;
  flex: none;
  height: 11px;
  margin: 0 9px 0 0;
  padding: 0 3px 0 2px;
  border: 1px solid #c2c2c2;
  background: #ececec;
}
.panel-title span {
  flex: 1;
  font-size: 10px;
  line-height: 10px;
}
.panel-title button {
  width: 8px;
  margin-left: 4px;
}
.panel-title svg {
  width: 8px;
  height: 8px;
}
.tree-frame {
  flex: 1;
  min-height: 0;
  display: flex;
  margin: 5px 13px 0 6px;
  padding: 3px 4px 2px 2px;
  border: 1px solid #d4d4d4;
  border-right: 2px solid #8d8d8d;
  border-bottom: 2px solid #8d8d8d;
}
.tree-well {
  flex: 1;
  min-width: 0;
  display: grid;
  grid-template-columns: 1fr 14px;
  grid-template-rows: 1fr 15px;
  border-top: 1px solid #777;
  border-left: 1px solid #777;
  background: #fdfdfd;
}
.tree {
  list-style: none;
  margin: 0;
  padding: 0;
  overflow: hidden;
  min-height: 0;
  min-width: 0;
}
.small {
  margin-right: 2px;
}
.small .node {
  margin-left: -9px;
}
.small .label {
  font-family: 'Liberation Sans', Arial, sans-serif;
  font-size: 10px;
}
.small .label.bold {
  font-size: 11px;
}
.node {
  display: flex;
  height: 17px;
  white-space: nowrap;
}
.cell {
  flex: none;
  width: 18px;
  height: 17px;
  position: relative;
}
.full {
  background: repeating-linear-gradient(#aaa 0 1px, transparent 1px 2px) 9px 0 / 1px 17px no-repeat;
}
.branch {
  background-image: repeating-linear-gradient(90deg, #aaa 0 1px, transparent 1px 2px);
  background-position: 9px 9px;
  background-size: 9px 1px;
  background-repeat: no-repeat;
}
.branch.up::before,
.branch.down::after {
  content: '';
  position: absolute;
  left: 9px;
  width: 1px;
  background: repeating-linear-gradient(#aaa 0 1px, transparent 1px 2px);
}
.branch.up::before {
  top: 0;
  height: 9px;
}
.branch.down::after {
  top: 9px;
  height: 8px;
}
.toggle {
  position: absolute;
  z-index: 1;
  left: 5px;
  top: 5px;
  width: 9px;
  height: 9px;
  border: 1px solid #888;
  background: linear-gradient(#111, #111) 1px 3px / 5px 1px no-repeat, #fff;
}
.toggle.closed {
  background: linear-gradient(#111, #111) 1px 3px / 5px 1px no-repeat,
    linear-gradient(#111, #111) 3px 1px / 1px 5px no-repeat, #fff;
}
.node-icon {
  flex: none;
  width: 16px;
  height: 16px;
  margin: 0 1px;
  fill: none;
}
.label {
  height: 16px;
  padding: 0 2px 0 3px;
  line-height: 16px;
}
.label.bold {
  font-weight: bold;
}
.label.selected {
  background: #ececec;
}
.vscroll {
  display: flex;
  flex-direction: column;
  background: #f0f0f0;
}
.arrow {
  flex: none;
  width: 14px;
  height: 17px;
}
.vtrack {
  flex: 1;
}
.vthumb {
  box-sizing: border-box;
  height: 67%;
  display: flex;
  flex-direction: column;
  align-items: center;
  justify-content: center;
  gap: 2px;
  border: 1px solid #9a9a9a;
  border-radius: 2px;
  background: linear-gradient(90deg, #f6f6f6, #d3d3d6);
}
.vthumb i {
  width: 6px;
  height: 1px;
  background: #777;
}
.hscroll {
  grid-column: 1 / 3;
  display: flex;
  background: #f0f0f0;
}
.harrow {
  flex: none;
  width: 20px;
  height: 15px;
}
.hthumb {
  box-sizing: border-box;
  width: 56px;
  height: 14px;
  margin-right: auto;
  display: flex;
  align-items: center;
  justify-content: center;
  gap: 2px;
  border: 1px solid #9a9a9a;
  border-radius: 2px;
  background: linear-gradient(#f6f6f6, #d3d3d6);
}
.hthumb i {
  width: 1px;
  height: 6px;
  background: #666;
}
.hscroll .harrow:last-child {
  margin-right: 14px;
}
.tab {
  align-self: flex-start;
  flex: none;
  height: 17px;
  margin: 0 0 7px 6px;
  padding: 0 6px 0 5px;
  border: 1px solid #d8d8d8;
  border-top: 0;
  border-right: 2px solid #8d8d8d;
  border-bottom: 1px solid #8d8d8d;
  font: 10px 'Liberation Sans', Arial, sans-serif;
}
.model-panel {
  min-height: 0;
  overflow: hidden;
  margin-right: 2px;
  border-top: 1px solid #777;
  border-left: 2px solid #888;
  background: #fdfdfd;
}
.model-panel .node {
  margin-left: -3px;
}
.viewport {
  min-width: 0;
  min-height: 0;
  overflow: hidden;
  margin-left: 4px;
  border-top: 1px solid #777;
  border-left: 2px solid #888;
  background: #fdfdfd;
}
.viewport svg {
  width: 100%;
  height: 100%;
}
.part path {
  vector-effect: non-scaling-stroke;
}
.axis {
  font: bold 10px 'Liberation Sans', Arial, sans-serif;
}
.scale {
  font: 11px 'Liberation Sans', Arial, sans-serif;
}
</style>
